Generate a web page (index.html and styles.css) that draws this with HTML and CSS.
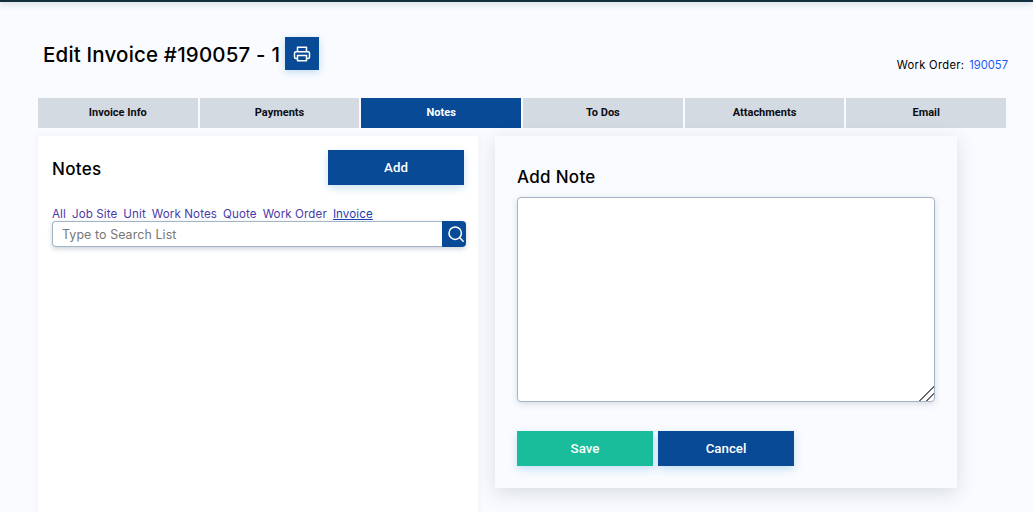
FILE: index.html
```html
<!DOCTYPE html>
<html lang="en">
<head>
<meta charset="utf-8">
<title>Edit Invoice</title>
<link rel="stylesheet" href="styles.css">
</head>
<body>
<div class="topbar"></div>
<main class="page">
  <header class="head">
    <div class="title-row">
      <h1 class="title">Edit Invoice #190057 - 1</h1>
      <button class="print" type="button" aria-label="Print">
        <svg width="18" height="18" viewBox="0 0 24 24" fill="none" stroke="#fff" stroke-width="2" stroke-linejoin="round">
          <path d="M6 9V3h12v6"/>
          <path d="M6 18H4a2 2 0 0 1-2-2v-5a2 2 0 0 1 2-2h16a2 2 0 0 1 2 2v5a2 2 0 0 1-2 2h-2"/>
          <path d="M6 14h12v7H6z"/>
        </svg>
      </button>
    </div>
    <div class="work-order"><span class="wo-label">Work Order:</span><a href="#">190057</a></div>
  </header>
  <nav class="tabs">
    <a class="tab" href="#">Invoice Info</a>
    <a class="tab" href="#">Payments</a>
    <a class="tab active" href="#">Notes</a>
    <a class="tab" href="#">To Dos</a>
    <a class="tab" href="#">Attachments</a>
    <a class="tab" href="#">Email</a>
  </nav>
  <div class="columns">
    <section class="list-card">
      <div class="list-head">
        <h2 class="card-title">Notes</h2>
        <button class="btn btn-blue" type="button">Add</button>
      </div>
      <div class="filters">
        <a href="#">All</a><a href="#">Job Site</a><a href="#">Unit</a><a href="#">Work Notes</a><a href="#">Quote</a><a href="#">Work Order</a><a class="current" href="#">Invoice</a>
      </div>
      <div class="search">
        <input class="search-input" type="text" placeholder="Type to Search List">
        <button class="search-btn" type="button" aria-label="Search">
          <svg width="18" height="18" viewBox="0 0 18 18" fill="none" stroke="#fff" stroke-width="1.5" stroke-linecap="round">
            <circle cx="8.2" cy="8.2" r="6.2"/>
            <path d="M12.8 12.8l3.4 3.4"/>
          </svg>
        </button>
      </div>
    </section>
    <section class="form-card">
      <h2 class="card-title form-title">Add Note</h2>
      <textarea class="note"></textarea>
      <div class="actions">
        <button class="btn btn-green" type="button">Save</button>
        <button class="btn btn-blue" type="button">Cancel</button>
      </div>
    </section>
  </div>
</main>
</body>
</html>
```
FILE: styles.css
```css
* { box-sizing: border-box; }
html, body { height: 100%; }
body {
  margin: 0;
  height: 512px;
  overflow: hidden;
  background: #f9fbfe;
  font-family: "Inter", "Liberation Sans", sans-serif;
  color: #000;
}
.topbar {
  height: 2px;
  background: #12303f;
  box-shadow: 0 1px 6px rgba(18, 48, 63, .35);
}
.page { padding: 35px 25px 0 38px; }
.head {
  display: flex;
  justify-content: space-between;
  align-items: flex-start;
  height: 61px;
}
.title-row { display: flex; align-items: flex-start; gap: 5px; padding-left: 5px; }
.title {
  margin: 0;
  padding-top: 1px;
  font-size: 20.5px;
  font-weight: 500;
  letter-spacing: .18px;
  line-height: 34px;
  white-space: nowrap;
}
.print {
  width: 34px;
  height: 33px;
  padding: 0;
  border: 0;
  background: #094a97;
  display: flex;
  align-items: center;
  justify-content: center;
  box-shadow: 0 2px 7px rgba(60, 150, 220, .3);
}
.work-order {
  display: flex;
  gap: 5px;
  margin-top: 20px;
  font-size: 11.2px;
  line-height: 16px;
}
.wo-label { letter-spacing: .3px; }
.work-order a { color: #1a5cf5; text-decoration: none; }
.tabs { display: flex; gap: 2px; width: 968px; height: 30px; }
.tab {
  flex: 1;
  display: flex;
  align-items: center;
  justify-content: center;
  padding-bottom: 1px;
  background: #d3dae1;
  color: #0c0c14;
  font-family: Roboto, "Liberation Sans", sans-serif;
  font-size: 11px;
  font-weight: 700;
  text-decoration: none;
}
.tab.active { background: #094a97; color: #fff; }
.columns { display: flex; align-items: flex-start; gap: 17px; margin-top: 8px; }
.list-card {
  width: 440px;
  height: 400px;
  background: #fff;
  padding: 14px 14px 0;
  box-shadow: 0 0 8px rgba(50, 60, 80, .05);
}
.list-head { display: flex; justify-content: space-between; align-items: flex-start; height: 57px; }
.card-title {
  margin: 0;
  padding-top: 8px;
  font-size: 17px;
  font-weight: 500;
  letter-spacing: .3px;
  line-height: 22px;
}
.btn {
  flex: none;
  width: 136px;
  height: 35px;
  border: 0;
  padding: 0;
  color: #fff;
  font-family: Roboto, "Liberation Sans", sans-serif;
  font-size: 13.3px;
  font-weight: 500;
  box-shadow: 0 3px 8px rgba(60, 150, 220, .28);
}
.btn-blue { background: #094a97; }
.btn-green { background: #19bd9c; }
.filters {
  display: flex;
  gap: 6px;
  font-size: 11.6px;
  line-height: 14px;
  letter-spacing: .1px;
}
.filters a { color: #4b3aa8; text-decoration: none; }
.filters a.current { color: #1f3fb0; text-decoration: underline; }
.search {
  display: flex;
  width: 414px;
  height: 26px;
  border-radius: 4px;
  box-shadow: 0 2px 5px rgba(60, 80, 110, .25);
}
.search-input {
  flex: 1;
  min-width: 0;
  height: 26px;
  padding: 0 9px;
  border: 1px solid #a3b5c5;
  border-right: 0;
  border-radius: 4px 0 0 4px;
  background: #fff;
  font-family: "Inter", "Liberation Sans", sans-serif;
  font-size: 12.4px;
  letter-spacing: .1px;
  outline: none;
}
.search-input::placeholder { color: #777; opacity: 1; }
.search-btn {
  width: 24px;
  height: 26px;
  padding: 0 0 0 4px;
  border: 0;
  border-radius: 0 4px 4px 0;
  background: #094a97;
  display: flex;
  align-items: center;
  justify-content: center;
}
.form-card {
  width: 462px;
  height: 352px;
  background: #f9fbfe;
  padding: 22px 22px 0;
  box-shadow: 0 5px 18px rgba(50, 60, 80, .16);
}
.form-title { line-height: 22px; }
.note {
  display: block;
  width: 418px;
  height: 205px;
  margin-top: 9px;
  border: 1px solid #a3b5c5;
  border-radius: 4px;
  background: #fff;
  box-shadow: 0 2px 6px rgba(60, 80, 110, .18);
  outline: none;
}
.note::-webkit-resizer {
  background: linear-gradient(135deg, transparent 0 48%, #666 48% 55%, transparent 55% 70%, #666 70% 77%, transparent 77%);
}
.actions { display: flex; gap: 5px; margin-top: 29px; }
```
